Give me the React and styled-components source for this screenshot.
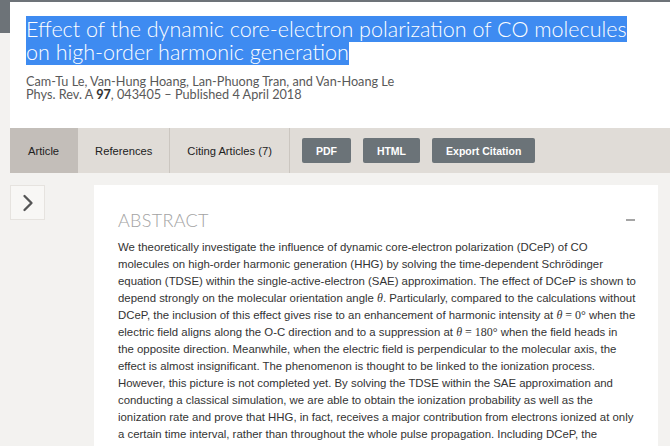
import React from 'react'
import styled, { createGlobalStyle } from 'styled-components'
import { ChevronRight } from 'lucide-react'

const GlobalStyle = createGlobalStyle`
  html, body {
    margin: 0;
    padding: 0;
    background: #f3f2f0;
    overflow: hidden;
  }
  body {
    font-family: "Liberation Sans", Arial, sans-serif;
  }
`

const Page = styled.div`
  width: 670px;
  height: 446px;
  overflow: hidden;
`

const TopBand = styled.div`
  height: 33px;
  background: #6d7378;
`

const Main = styled.div`
  margin: -31px 0 0 10px;
`

const Header = styled.header`
  background: #fff;
  padding: 16px 20px 0 16px;
  height: 126px;
  box-sizing: border-box;
`

const Title = styled.h1`
  margin: 0;
  font-family: Lato, "Open Sans", sans-serif;
  font-weight: 300;
  font-size: 21.5px;
  line-height: 22.5px;
  color: #fff;
`

// background on the outer span, text on a positioned inner span so that
// the second line's highlight never paints over the first line's descenders
const Selected = styled.span`
  background: #3e8bf1;
`

const SelectedText = styled.span`
  position: relative;
`

const Meta = styled.div`
  margin-top: 12px;
  font-family: Lato, "Open Sans", sans-serif;
  font-size: 12.7px;
  line-height: 13px;
  color: #595959;

  b {
    color: #333;
  }
`

const TabBar = styled.nav`
  display: flex;
  align-items: stretch;
  height: 45px;
  background: #e0dcd7;
`

const Tab = styled.div`
  display: flex;
  align-items: center;
  padding: 0 ${p => (p.$active ? '18px' : '17px')};
  font-size: 11.2px;
  color: #222;
  background: ${p => (p.$active ? '#c3beb9' : 'transparent')};
  border-right: 1px solid ${p => (p.$active ? '#c3beb9' : '#cbc6c0')};
`

const Buttons = styled.div`
  display: flex;
  align-items: center;
  gap: 12px;
  padding-left: 12px;
`

const Button = styled.div`
  height: 25px;
  padding: 0 14px;
  display: flex;
  align-items: center;
  background: #6b7378;
  border-radius: 2px;
  color: #fff;
  font-weight: 700;
  font-size: 10.5px;
`

const Body = styled.div`
  display: flex;
  align-items: flex-start;
  margin-top: 12px;
`

const Toggle = styled.div`
  width: 35px;
  height: 35px;
  box-sizing: border-box;
  display: flex;
  align-items: center;
  justify-content: center;
  background: #f8f7f5;
  border: 1px solid #e6e3df;
  color: #555;
`

const Card = styled.section`
  margin-left: 49px;
  width: 564px;
  min-height: 300px;
  box-sizing: border-box;
  background: #fff;
  padding: 25px 20px 0 24px;
`

const CardHead = styled.div`
  display: flex;
  align-items: center;
  justify-content: space-between;
`

const Heading = styled.h2`
  margin: 0;
  font-family: Lato, "Open Sans", sans-serif;
  font-weight: 300;
  font-size: 18px;
  line-height: 20px;
  letter-spacing: 0.3px;
  color: #a3a3a3;
`

const Collapse = styled.span`
  width: 9px;
  height: 2px;
  margin-right: 3px;
  background: #a5a5a5;
`

const Abstract = styled.p`
  margin: 9px 0 0;
  font-size: 11.4px;
  line-height: 17px;
  color: #333;
  white-space: nowrap;
`

const Eq = styled.span`
  font-family: "Liberation Serif", serif;
  font-size: 12px;

  em {
    font-style: italic;
  }
`

export default function App() {
  return (
    <Page>
      <GlobalStyle />
      <TopBand />
      <Main>
        <Header>
          <Title>
            <Selected>
              <SelectedText>
                Effect of the dynamic core-electron polarization of CO molecules on high-order harmonic generation
              </SelectedText>
            </Selected>
          </Title>
          <Meta>
            Cam-Tu Le, Van-Hung Hoang, Lan-Phuong Tran, and Van-Hoang Le
            <br />
            Phys. Rev. A <b>97</b>, 043405 – Published 4 April 2018
          </Meta>
        </Header>
        <TabBar>
          <Tab $active>Article</Tab>
          <Tab>References</Tab>
          <Tab>Citing Articles (7)</Tab>
          <Buttons>
            <Button>PDF</Button>
            <Button>HTML</Button>
            <Button>Export Citation</Button>
          </Buttons>
        </TabBar>
        <Body>
          <Toggle>
            <ChevronRight size={28} strokeWidth={2} />
          </Toggle>
          <Card>
            <CardHead>
              <Heading>ABSTRACT</Heading>
              <Collapse />
            </CardHead>
            <Abstract>
              We theoretically investigate the influence of dynamic core-electron polarization (DCeP) of CO<br />
              molecules on high-order harmonic generation (HHG) by solving the time-dependent Schrödinger<br />
              equation (TDSE) within the single-active-electron (SAE) approximation. The effect of DCeP is shown to<br />
              depend strongly on the molecular orientation angle <Eq><em>θ</em></Eq>. Particularly, compared to the calculations without<br />
              DCeP, the inclusion of this effect gives rise to an enhancement of harmonic intensity at{' '}
              <Eq><em>θ</em> = 0°</Eq> when the<br />
              electric field aligns along the O-C direction and to a suppression at <Eq><em>θ</em> = 180°</Eq> when the field heads in<br />
              the opposite direction. Meanwhile, when the electric field is perpendicular to the molecular axis, the<br />
              effect is almost insignificant. The phenomenon is thought to be linked to the ionization process.<br />
              However, this picture is not completed yet. By solving the TDSE within the SAE approximation and<br />
              conducting a classical simulation, we are able to obtain the ionization probability as well as the<br />
              ionization rate and prove that HHG, in fact, receives a major contribution from electrons ionized at only<br />
              a certain time interval, rather than throughout the whole pulse propagation. Including DCeP, the
            </Abstract>
          </Card>
        </Body>
      </Main>
    </Page>
  )
}
